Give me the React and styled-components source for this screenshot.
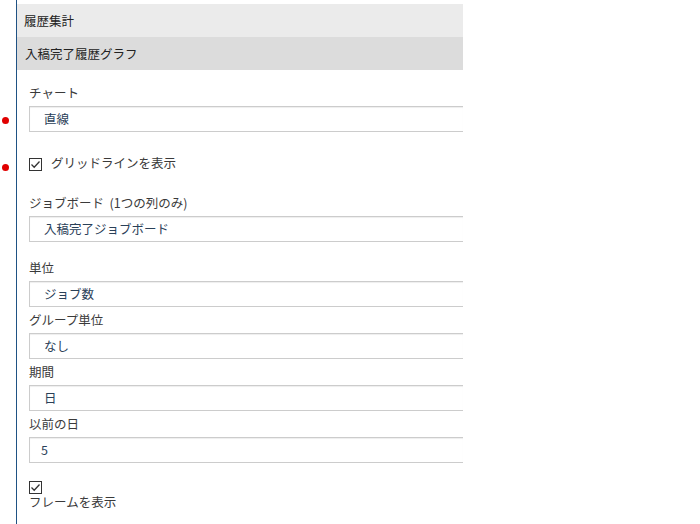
import React from 'react';
import styled, { createGlobalStyle } from 'styled-components';

const GlobalStyle = createGlobalStyle`
  html, body {
    margin: 0;
    padding: 0;
    background: #fff;
  }
  body {
    font-family: "Noto Sans CJK JP", "Noto Sans", sans-serif;
    font-size: 12px;
    color: #333;
  }
`;

const Frame = styled.div`
  margin-left: 16px;
  min-height: 524px;
  box-sizing: border-box;
  border-left: 1px solid #1f5284;
  padding-top: 4px;
`;

const Panel = styled.div`
  width: 446px;
`;

const Header = styled.div`
  height: 33px;
  line-height: 33px;
  padding-left: ${p => p.indent}px;
  background: ${p => p.shade};
  font-size: 12.5px;
  color: #222;
`;

const Body = styled.div`
  padding: 10px 0 0 12px;
`;

const Field = styled.div`
  position: relative;
  margin-bottom: ${p => p.gap || 0}px;
`;

const Label = styled.div`
  height: 26px;
  line-height: 26px;
  font-size: 12.5px;
  color: #3a3a3a;
  white-space: pre;
`;

const Input = styled.div`
  box-sizing: border-box;
  height: 26px;
  line-height: 24px;
  border: 1px solid #ccc;
  border-right: none;
  box-shadow: inset 0 1px 1px rgba(0, 0, 0, 0.07);
  padding-left: ${p => p.pad || 14}px;
  font-size: 12.5px;
  color: #2a4058;
`;

const Marker = styled.span`
  position: absolute;
  left: -27px;
  top: ${p => p.top}px;
  width: 7px;
  height: 7px;
  border-radius: 50%;
  background: #e00000;
`;

const CheckRow = styled.div`
  position: relative;
  display: flex;
  align-items: flex-start;
  gap: 9px;
  margin: ${p => p.mt}px 0 ${p => p.mb}px;
`;

const StackedCheck = styled.div`
  margin-top: 18px;
  display: flex;
  flex-direction: column;
  align-items: flex-start;
`;

const Box = styled.span`
  box-sizing: border-box;
  width: 13px;
  height: 13px;
  border: 1px solid #333;
  display: inline-flex;
  align-items: center;
  justify-content: center;
  flex: none;
  background: #fff;
`;

const CheckText = styled.span`
  font-size: 12.5px;
  line-height: ${p => p.lh}px;
  color: #3a3a3a;
  margin-top: ${p => p.offset || 0}px;
`;

const Tick = () => (
  <svg width="11" height="11" viewBox="0 0 11 11">
    <polyline points="1.5,5.5 4.2,8.2 9.5,2.5" fill="none" stroke="#333" strokeWidth="1.3" />
  </svg>
);

const Check = () => (
  <Box>
    <Tick />
  </Box>
);

const fields = [
  { label: 'ジョブボード  (1つの列のみ)', value: '入稿完了ジョブボード', gap: 13 },
  { label: '単位', value: 'ジョブ数' },
  { label: 'グループ単位', value: 'なし' },
  { label: '期間', value: '日' },
  { label: '以前の日', value: '5', pad: 11 },
];

export default function App() {
  return (
    <>
      <GlobalStyle />
      <Frame>
        <Panel>
          <Header shade="#ebebeb" indent={7}>履歴集計</Header>
          <Header shade="#dcdcdc" indent={8}>入稿完了履歴グラフ</Header>
          <Body>
            <Field>
              <Marker top={37} />
              <Label>チャート</Label>
              <Input>直線</Input>
            </Field>

            <CheckRow mt={26} mb={19}>
              <Marker top={6} />
              <Check />
              <CheckText lh={16} offset={-3}>グリッドラインを表示</CheckText>
            </CheckRow>

            {fields.map(f => (
              <Field key={f.label} gap={f.gap}>
                <Label>{f.label}</Label>
                <Input pad={f.pad}>{f.value}</Input>
              </Field>
            ))}

            <StackedCheck>
              <Check />
              <CheckText lh={16}>フレームを表示</CheckText>
            </StackedCheck>
          </Body>
        </Panel>
      </Frame>
    </>
  );
}
